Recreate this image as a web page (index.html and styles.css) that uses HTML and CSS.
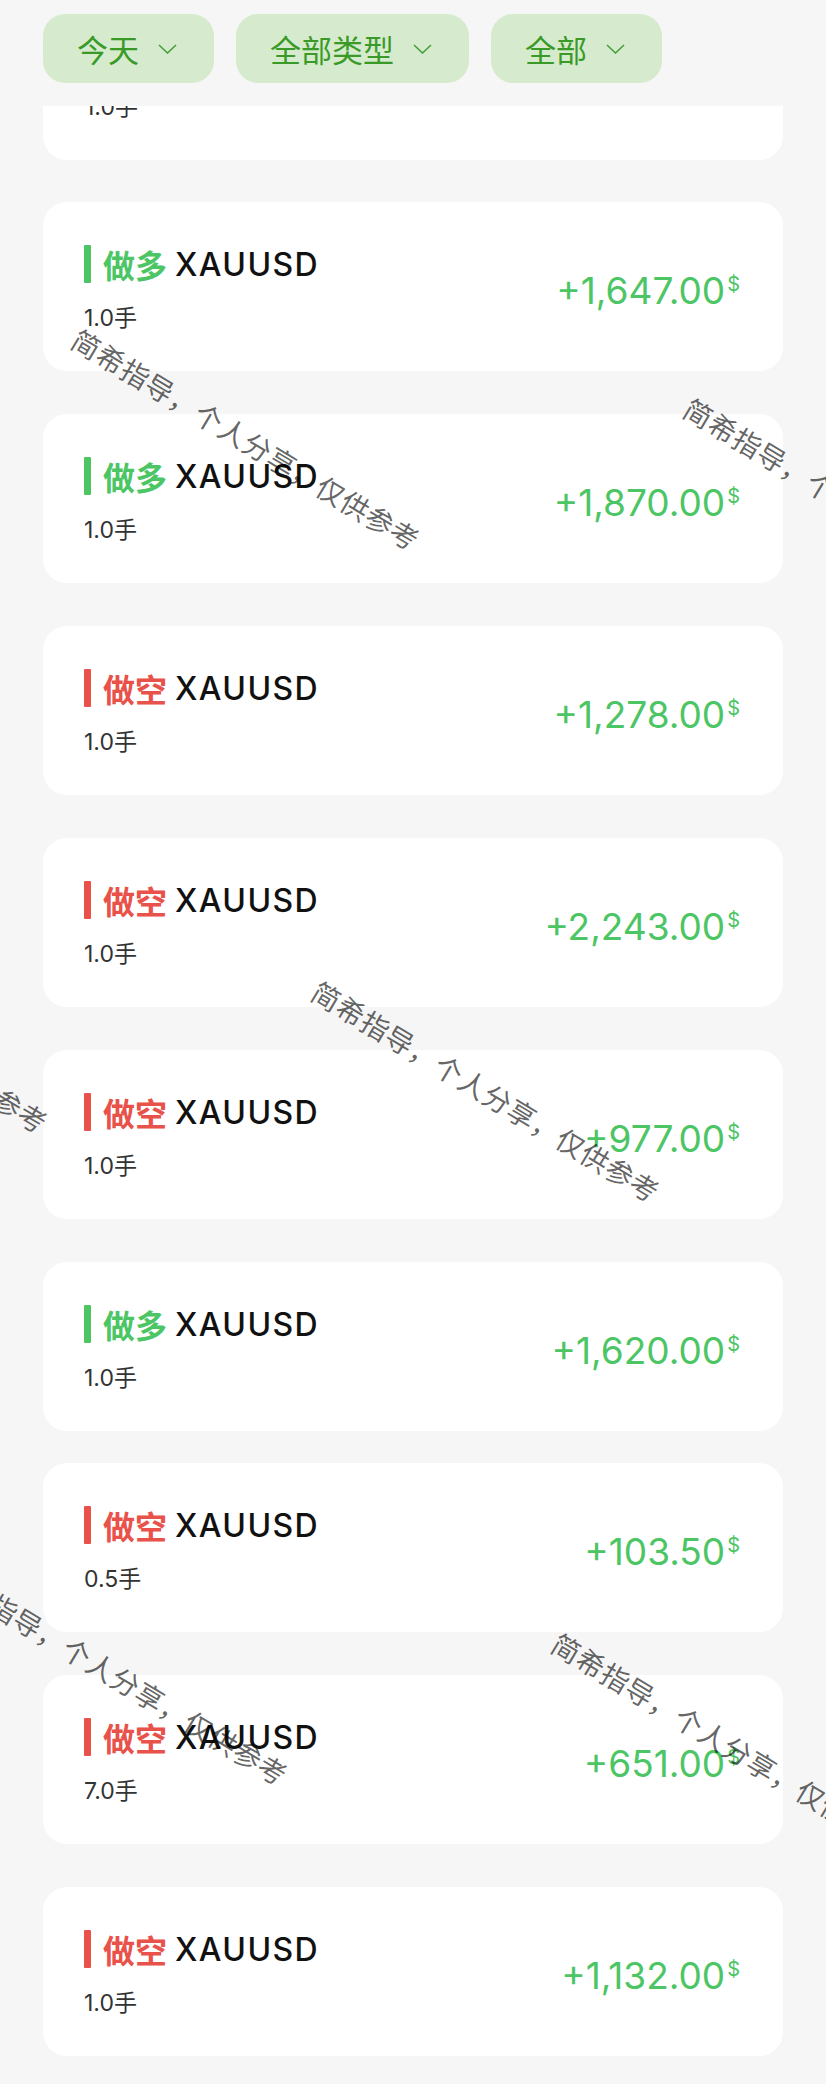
FILE: index.html
```html
<!DOCTYPE html>
<html lang="zh-CN">
<head>
    <meta charset="UTF-8">
    <meta name="viewport" content="width=device-width, initial-scale=1.0">
    <title>交易记录</title>
    <link rel="stylesheet" href="styles.css">
</head>
<body>
    <div class="header">
        <div class="chip">今天<svg class="chevron" viewBox="0 0 19 10"><polyline points="1,1 9.5,9 18,1"/></svg></div>
        <div class="chip">全部类型<svg class="chevron" viewBox="0 0 19 10"><polyline points="1,1 9.5,9 18,1"/></svg></div>
        <div class="chip">全部<svg class="chevron" viewBox="0 0 19 10"><polyline points="1,1 9.5,9 18,1"/></svg></div>
    </div>

    <div class="list">
        <!-- scrolled half out of view under the header -->
        <div class="card-cut">
            <div class="lots">1.0手</div>
        </div>

        <div class="card long">
            <div class="info">
                <div class="title"><span class="bar"></span><span class="side">做多</span><span class="symbol">XAUUSD</span></div>
                <div class="lots">1.0手</div>
            </div>
            <div class="amount">+1,647.00<span class="cur">$</span></div>
        </div>

        <div class="card long">
            <div class="info">
                <div class="title"><span class="bar"></span><span class="side">做多</span><span class="symbol">XAUUSD</span></div>
                <div class="lots">1.0手</div>
            </div>
            <div class="amount">+1,870.00<span class="cur">$</span></div>
        </div>

        <div class="card short">
            <div class="info">
                <div class="title"><span class="bar"></span><span class="side">做空</span><span class="symbol">XAUUSD</span></div>
                <div class="lots">1.0手</div>
            </div>
            <div class="amount">+1,278.00<span class="cur">$</span></div>
        </div>

        <div class="card short">
            <div class="info">
                <div class="title"><span class="bar"></span><span class="side">做空</span><span class="symbol">XAUUSD</span></div>
                <div class="lots">1.0手</div>
            </div>
            <div class="amount">+2,243.00<span class="cur">$</span></div>
        </div>

        <div class="card short">
            <div class="info">
                <div class="title"><span class="bar"></span><span class="side">做空</span><span class="symbol">XAUUSD</span></div>
                <div class="lots">1.0手</div>
            </div>
            <div class="amount">+977.00<span class="cur">$</span></div>
        </div>

        <div class="card long">
            <div class="info">
                <div class="title"><span class="bar"></span><span class="side">做多</span><span class="symbol">XAUUSD</span></div>
                <div class="lots">1.0手</div>
            </div>
            <div class="amount">+1,620.00<span class="cur">$</span></div>
        </div>

        <div class="card short tight">
            <div class="info">
                <div class="title"><span class="bar"></span><span class="side">做空</span><span class="symbol">XAUUSD</span></div>
                <div class="lots">0.5手</div>
            </div>
            <div class="amount">+103.50<span class="cur">$</span></div>
        </div>

        <div class="card short">
            <div class="info">
                <div class="title"><span class="bar"></span><span class="side">做空</span><span class="symbol">XAUUSD</span></div>
                <div class="lots">7.0手</div>
            </div>
            <div class="amount">+651.00<span class="cur">$</span></div>
        </div>

        <div class="card short">
            <div class="info">
                <div class="title"><span class="bar"></span><span class="side">做空</span><span class="symbol">XAUUSD</span></div>
                <div class="lots">1.0手</div>
            </div>
            <div class="amount">+1,132.00<span class="cur">$</span></div>
        </div>
    </div>

    <!-- Watermark layer -->
    <div class="watermarks">
        <div class="wm wm-1">简希指导，个人分享，仅供参考</div>
        <div class="wm wm-2">简希指导，个人分享，仅供参考</div>
        <div class="wm wm-3">简希指导，个人分享，仅供参考</div>
        <div class="wm wm-4">简希指导，个人分享，仅供参考</div>
        <div class="wm wm-5">简希指导，个人分享，仅供参考</div>
        <div class="wm wm-6">简希指导，个人分享，仅供参考</div>
    </div>
</body>
</html>
```

FILE: styles.css
```css
html, body {
    margin: 0;
    padding: 0;
    overflow: hidden;
}

body {
    position: relative;
    width: 826px;
    min-height: 2084px;
    background-color: #f6f6f6;
    font-family: Inter, "Noto Sans CJK SC", sans-serif;
    color: #111;
}

/* Filter chips */
.header {
    display: flex;
    gap: 22px;
    height: 106px;
    box-sizing: border-box;
    padding: 14px 43px 0;
    background-color: #f6f6f6;
}

.chip {
    display: flex;
    align-items: center;
    height: 69px;
    box-sizing: border-box;
    padding: 0 37px 0 34px;
    border-radius: 22px;
    background-color: #d6ebcd;
    color: #3a9a28;
    font-family: "Noto Sans CJK SC", sans-serif;
    font-size: 31px;
    white-space: nowrap;
}

.chevron {
    width: 19px;
    height: 10px;
    margin-left: 19px;
    fill: none;
    stroke: #4a9e3a;
    stroke-width: 1.6;
}

/* Trade list */
.list {
    display: flex;
    flex-direction: column;
    gap: 43px;
    padding: 0 43px 28px;
}

.card-cut {
    height: 54px;
    overflow: hidden;
    margin-bottom: -1px;
    padding-left: 42px;
    background-color: #fff;
    border-radius: 0 0 24px 24px;
}

.card-cut .lots {
    margin-top: -14px;
}

.card {
    display: flex;
    align-items: center;
    justify-content: space-between;
    height: 169px;
    box-sizing: border-box;
    padding: 0 43px 0 41px;
    background-color: #fff;
    border-radius: 24px;
}

.card.tight {
    margin-top: -11px;
}

.info {
    margin-top: 5px;
}

.title {
    display: flex;
    align-items: center;
    height: 38px;
}

.bar {
    width: 7px;
    height: 38px;
    margin-right: 12px;
    border-radius: 1px;
}

.side {
    font-family: "Noto Sans CJK SC", sans-serif;
    font-size: 32px;
    font-weight: 700;
}

.symbol {
    margin-left: 8px;
    font-size: 32px;
    font-weight: 500;
    letter-spacing: 1.4px;
    color: #111;
}

.long .bar { background-color: #4cc564; }
.long .side { color: #4cc564; }
.short .bar { background-color: #e8524a; }
.short .side { color: #e8524a; }

.lots {
    margin-top: 20px;
    font-size: 23px;
    line-height: 30px;
    color: #333;
}

.amount {
    display: flex;
    align-items: flex-start;
    margin-top: 8px;
    font-size: 37px;
    color: #4cc564;
}

.cur {
    margin-left: 2px;
    margin-top: 6px;
    font-size: 20px;
    line-height: 1;
}

/* Watermarks */
.watermarks {
    position: absolute;
    top: 0;
    left: 0;
    width: 826px;
    height: 2084px;
    overflow: hidden;
    pointer-events: none;
}

.wm {
    position: absolute;
    white-space: nowrap;
    font-family: "Noto Sans CJK SC", sans-serif;
    font-size: 28px;
    letter-spacing: 0.5px;
    line-height: 1;
    color: rgba(0, 0, 0, 0.62);
    transform: translate(-50%, -50%) rotate(31deg);
}

.wm-1 { left: 246px; top: 439px; }
.wm-2 { left: 858px; top: 508px; }
.wm-3 { left: 486px; top: 1091px; }
.wm-4 { left: -126px; top: 1022px; }
.wm-5 { left: 114px; top: 1674px; }
.wm-6 { left: 726px; top: 1743px; }
```
